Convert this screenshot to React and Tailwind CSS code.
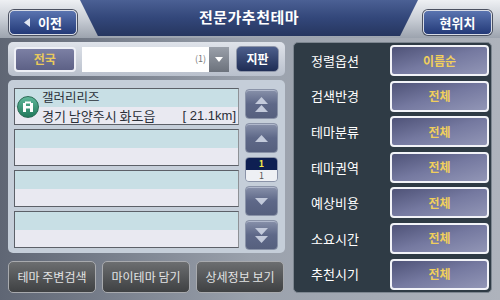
import React from 'react';

const font = { fontFamily: '"Noto Sans CJK KR", "Noto Sans", sans-serif' };

const options = [
  ['정렬옵션', '이름순'],
  ['검색반경', '전체'],
  ['테마분류', '전체'],
  ['테마권역', '전체'],
  ['예상비용', '전체'],
  ['소요시간', '전체'],
  ['추천시기', '전체'],
];

const Tri = ({ up = true, className = '' }) => (
  <svg width="13" height="7" viewBox="0 0 13 7" className={className}>
    {up ? <polygon points="6.5,0 13,7 0,7" fill="#c3cadb" /> : <polygon points="0,0 13,0 6.5,7" fill="#c3cadb" />}
  </svg>
);

const ScrollBtn = ({ children }) => (
  <div className="h-[30px] w-[33px] rounded-[4px] border border-[#8a93a8] bg-gradient-to-b from-[#8891aa] via-[#5e6888] to-[#56607e] flex flex-col items-center justify-center gap-[1px] shadow-[inset_0_1px_0_#b0b8cc]">
    {children}
  </div>
);

const ListItem = ({ children }) => (
  <div className="h-[37px] border border-[#5c6068] border-r-[#8e9196] flex flex-col relative">
    <div className="h-1/2 bg-[#c8dfe5]" />
    <div className="h-1/2 bg-[#e9e9f1]" />
    {children}
  </div>
);

export default function App() {
  return (
    <div style={font} className="w-[500px] h-[300px] overflow-hidden bg-gradient-to-r from-[#5f6674] via-[#9aa1ac] to-[#aeb3bc] flex flex-col">
      {/* header */}
      <div className="h-[38px] flex items-start bg-gradient-to-b from-[#eef0f3] via-[#c9ced6] to-[#9ca3ae]">
        <div className="ml-[9px] mt-[10px] w-[68px] h-[25px] rounded-[5px] border border-[#d8dce6] bg-gradient-to-b from-[#5a74b0] to-[#243a78] flex items-center justify-center gap-[8px] shadow-[0_0_0_1px_#4a5060]">
          <svg width="6" height="9" viewBox="0 0 6 9"><polygon points="6,0 6,9 0,4.5" fill="#e0e6f2" /></svg>
          <span className="text-white text-[13px] font-bold leading-none">이전</span>
        </div>
        <div
          className="ml-[3px] w-[338px] h-[36px] bg-gradient-to-b from-[#4b6094] via-[#33477a] to-[#26365f] flex items-center justify-center"
          style={{ clipPath: 'polygon(0 0, 100% 0, 94.7% 100%, 5.3% 100%)' }}
        >
          <span className="text-white text-[15px] font-bold tracking-[0.5px] -mt-[2px]">전문가추천테마</span>
        </div>
        <div className="ml-[5px] mt-[10px] w-[69px] h-[25px] rounded-[5px] border border-[#d8dce6] bg-gradient-to-b from-[#5a74b0] to-[#243a78] flex items-center justify-center shadow-[0_0_0_1px_#4a5060]">
          <span className="text-white text-[13px] font-bold leading-none">현위치</span>
        </div>
      </div>

      <div className="flex pl-[8px] pt-[4px] gap-[8px]">
        {/* left column */}
        <div className="w-[277px] flex flex-col">
          <div className="h-[34px] rounded-[5px] bg-gradient-to-b from-[#dfe3ea] to-[#b9c0cc] flex items-center px-[6px]">
            <div className="w-[62px] h-[25px] rounded-[4px] border-2 border-[#eef0f6] bg-gradient-to-b from-[#7c80a4] to-[#5d6186] flex items-center justify-center">
              <span className="text-[#e9c95c] text-[12px] font-bold">전국</span>
            </div>
            <div className="ml-[6px] w-[148px] h-[25px] flex bg-white">
              <div className="flex-1 flex items-center justify-end pr-[3px] text-[9px] text-[#777]">(1)</div>
              <div className="w-[20px] bg-gradient-to-b from-[#9aa0aa] to-[#6c727c] flex items-center justify-center">
                <svg width="8" height="5" viewBox="0 0 8 5"><polygon points="0,0 8,0 4,5" fill="#fff" /></svg>
              </div>
            </div>
            <div className="ml-[7px] w-[43px] h-[26px] rounded-[5px] border border-[#8c94a8] bg-gradient-to-b from-[#4d5f8c] to-[#1f2d55] flex items-center justify-center">
              <span className="text-white text-[12px] font-bold">지판</span>
            </div>
          </div>

          <div className="mt-[4px] h-[173px] rounded-[5px] bg-[#c5ced9] flex px-[6px] pt-[8px] gap-[6px]">
            <div className="w-[225px] flex flex-col gap-[4px]">
              <ListItem>
                <div className="absolute inset-0 flex items-center">
                  <div className="ml-[2px] w-[22px] h-[22px] rounded-full bg-gradient-to-b from-[#5fb79a] to-[#1f7a5c] border border-[#2b6b55] flex items-center justify-center">
                    <svg width="12" height="12" viewBox="0 0 12 12">
                      <rect x="1" y="2" width="3" height="9" fill="#fff" />
                      <rect x="8" y="2" width="3" height="9" fill="#fff" />
                      <rect x="1" y="5" width="10" height="2.5" fill="#fff" />
                      <rect x="3" y="0.5" width="6" height="2" fill="#fff" />
                    </svg>
                  </div>
                  <div className="ml-[3px] flex-1 flex flex-col leading-none text-[#2a2f38]">
                    <span className="text-[12.5px] h-[18px] flex items-center">갤러리리즈</span>
                    <div className="h-[18px] flex items-center justify-between pr-[2px]">
                      <span className="text-[13px]">경기 남양주시 화도읍</span>
                      <span className="text-[13px]" style={{ fontFamily: '"Liberation Sans", sans-serif' }}>[ 21.1km]</span>
                    </div>
                  </div>
                </div>
              </ListItem>
              <ListItem />
              <ListItem />
              <ListItem />
            </div>
            <div className="w-[33px] flex flex-col gap-[4px] pt-[1px]">
              <ScrollBtn><Tri /><Tri /></ScrollBtn>
              <ScrollBtn><Tri /></ScrollBtn>
              <div className="h-[25px] w-[33px] rounded-[4px] border border-[#8a93a8] overflow-hidden flex flex-col">
                <div className="h-1/2 bg-[#0e1f52] flex items-center justify-center text-[9px] text-[#f2e84a] leading-none font-bold">1</div>
                <div className="h-1/2 bg-[#eef0f4] flex items-center justify-center text-[9px] text-[#555] leading-none">1</div>
              </div>
              <ScrollBtn><Tri up={false} /></ScrollBtn>
              <ScrollBtn><Tri up={false} /><Tri up={false} /></ScrollBtn>
            </div>
          </div>

          <div className="mt-[8px] flex gap-[6px]">
            {['테마 주변검색', '마이테마 담기', '상세정보 보기'].map((t) => (
              <div key={t} className="w-[88px] h-[32px] rounded-[5px] border border-[#a8aaae] bg-gradient-to-b from-[#6c6e70] to-[#3f4143] flex items-center justify-center">
                <span className="text-[#e2e3e4] text-[12px]">{t}</span>
              </div>
            ))}
          </div>
        </div>

        {/* right panel */}
        <div className="w-[199px] h-[251px] rounded-[5px] border border-[#7d8690] bg-[#2f3b45] flex flex-col pt-[2px] gap-[4.6px]">
          {options.map(([label, value]) => (
            <div key={label} className="h-[31px] flex items-center">
              <span className="ml-[17px] w-[79px] text-white text-[13px]">{label}</span>
              <div className="w-[99px] h-[31px] rounded-[4px] border-2 border-[#f2f3f8] bg-gradient-to-br from-[#4f5378] via-[#7579a0] to-[#9296b6] flex items-center justify-center">
                <span className="text-[#f0cf5c] text-[12px] font-bold">{value}</span>
              </div>
            </div>
          ))}
        </div>
      </div>
    </div>
  );
}
